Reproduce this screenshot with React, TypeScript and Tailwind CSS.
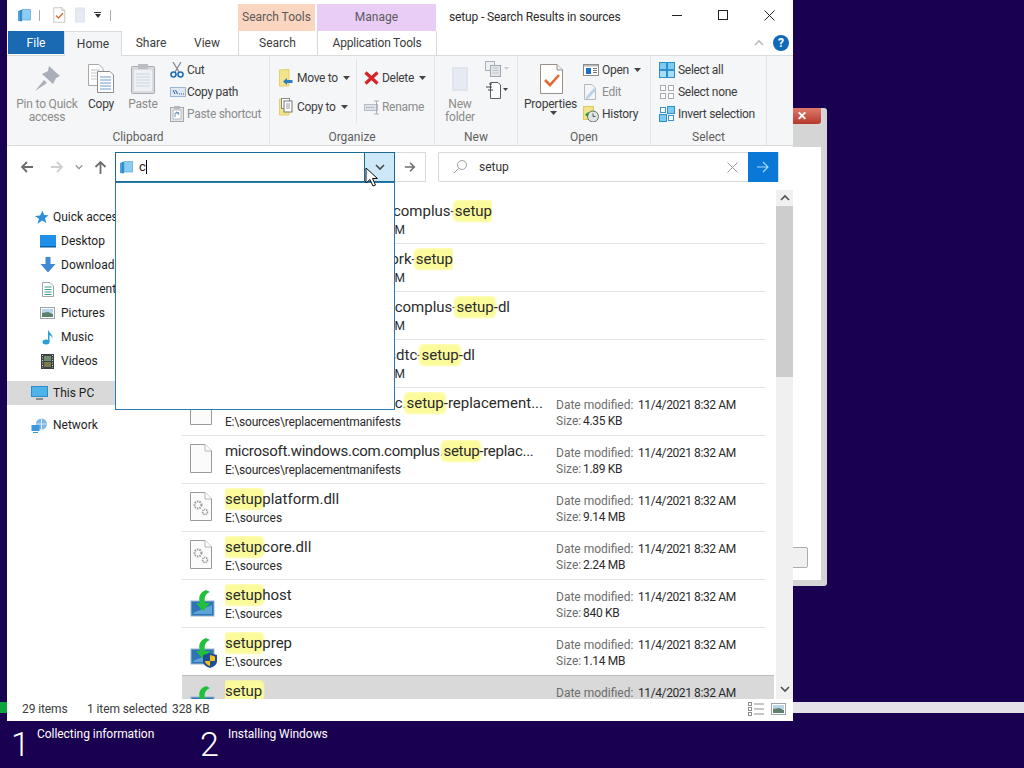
import React from 'react';

// small drawings for the ribbon and the explorer panes
const ExplorerIcon = ({ size = 15 }: { size?: number }) => (
  <svg width={size} height={size} viewBox="0 0 15 15">
    <path d="M1 3 L5 1.5 V13.5 L1 13 Z" fill="#4aa3df" />
    <path d="M5 1.5 H13.5 V12 H5 Z" fill="#8ccdf2" />
    <path d="M3 2 H5 V13 H3 Z" fill="#2f86c5" />
    <path d="M5 1.5 H13.5 V12 H5 Z" fill="none" stroke="#5aa6d6" strokeWidth="0.7" />
  </svg>
);

const PropertiesIcon = ({ size = 32 }: { size?: number }) => (
  <svg width={size} height={size} viewBox="0 0 32 32">
    <path d="M5.5 1.5 H22 L27.5 7 V30.5 H5.5 Z" fill="#fff" stroke="#9a8f88" />
    <path d="M22 1.5 V7 H27.5" fill="#eee" stroke="#9a8f88" />
    <path d="M10 17 L15 22 L24 12" fill="none" stroke="#df6b33" strokeWidth="2.6" />
  </svg>
);

const PinIcon = () => (
  <svg width="32" height="32" viewBox="0 0 32 32">
    <path d="M18 3 L29 13 L25 15 L22 21 L11 11 L17 8 Z" fill="#a9afb8" />
    <path d="M13 17 L4 28 L16 20 Z" fill="#a9afb8" />
  </svg>
);

const CopyIcon = () => (
  <svg width="32" height="32" viewBox="0 0 32 32">
    <path d="M3.5 1.5 H14 L18 5.5 V22.5 H3.5 Z" fill="#fff" stroke="#a8a8a8" />
    <path d="M6 7h9M6 10h9M6 13h9M6 16h9" stroke="#c5c5c5" />
    <path d="M12.5 8.5 H25 L28.5 12 V29.5 H12.5 Z" fill="#fff" stroke="#8d8d8d" />
    <path d="M15 14h11M15 17h11M15 20h11M15 23h11M15 26h11" stroke="#6b9cc9" />
  </svg>
);

const PasteIcon = () => (
  <svg width="32" height="32" viewBox="0 0 32 32">
    <rect x="4.5" y="3.5" width="23" height="27" rx="1" fill="#d7dade" stroke="#a7abb0" />
    <rect x="7" y="7" width="18" height="21" fill="#eef1f6" />
    <path d="M9 11h14M9 14h14M9 17h14M9 20h14M9 23h14" stroke="#c9d2df" />
    <rect x="11" y="1" width="10" height="5" fill="#b9bcc1" />
  </svg>
);

const CutIcon = () => (
  <svg width="14" height="16" viewBox="0 0 14 16">
    <path d="M3 0 L9 10 M11 0 L5 10" stroke="#8a8a8a" strokeWidth="1.3" />
    <circle cx="3.5" cy="12.5" r="2.5" fill="none" stroke="#1f6fb5" strokeWidth="1.6" />
    <circle cx="10.5" cy="12.5" r="2.5" fill="none" stroke="#1f6fb5" strokeWidth="1.6" />
  </svg>
);

const CopyPathIcon = () => (
  <svg width="16" height="10" viewBox="0 0 16 10">
    <rect x="0.5" y="0.5" width="15" height="9" fill="#dfe9f5" stroke="#9db7d3" />
    <path d="M3 3 L5 7 M5.5 3 L7.5 7" stroke="#2a5f95" />
    <path d="M9 7h1M11 7h1M13 7h1" stroke="#2a5f95" />
  </svg>
);

const PasteShortcutIcon = () => (
  <svg width="14" height="16" viewBox="0 0 14 16">
    <rect x="0.5" y="1.5" width="13" height="14" fill="#e3e6ea" stroke="#a5a9ae" />
    <rect x="3" y="4" width="8" height="9" fill="#fff" stroke="#b5b9be" />
    <path d="M5 11 V7 H9 M6 6 L9 7 L8 9" fill="none" stroke="#6f8fb0" />
    <rect x="4" y="0" width="6" height="3" fill="#b4b7bb" />
  </svg>
);

const MoveToIcon = () => (
  <svg width="14" height="18" viewBox="0 0 14 18">
    <path d="M0.5 1 L10 0.5 V17 H0.5 Z" fill="#f4e38d" stroke="#e5cf6b" />
    <path d="M4 12.5 L8 9 V11 H13.5 V14 H8 V16 Z" fill="#2e7cc2" />
  </svg>
);

const CopyToIcon = () => (
  <svg width="14" height="18" viewBox="0 0 14 18">
    <path d="M0.5 1 L10 0.5 V17 H0.5 Z" fill="#f4e38d" stroke="#e5cf6b" />
    <rect x="2.5" y="0.5" width="8" height="10" fill="#fff" stroke="#8a8a8a" />
    <rect x="5" y="3" width="8" height="11" fill="#fff" stroke="#777" />
    <path d="M7 6h4M7 8h4M7 10h4" stroke="#999" />
  </svg>
);

const DeleteIcon = () => (
  <svg width="15" height="14" viewBox="0 0 15 14">
    <path d="M1.5 1.5 L13.5 12.5 M13.5 1.5 L1.5 12.5" stroke="#d5252b" strokeWidth="3.2" />
  </svg>
);

const RenameIcon = () => (
  <svg width="18" height="15" viewBox="0 0 18 15">
    <rect x="0.5" y="4.5" width="13" height="6" fill="#dde2e8" stroke="#b9bec4" />
    <path d="M2 7.5h8" stroke="#9ba3ac" strokeDasharray="1.5 1" />
    <path d="M10 1h5M10 14h5M12.5 1v13" stroke="#a9aeb5" />
  </svg>
);

const NewFolderIcon = ({ w = 18, h = 26 }: { w?: number; h?: number }) => (
  <svg width={w} height={h} viewBox="0 0 18 26">
    <rect x="1" y="1" width="16" height="24" rx="1" fill="#dfe4ee" />
    <rect x="3" y="3" width="12" height="20" fill="#e6eaf3" />
  </svg>
);

const SmallCopyGray = () => (
  <svg width="24" height="16" viewBox="0 0 24 16">
    <rect x="0.5" y="0.5" width="9" height="9" fill="#eceff3" stroke="#a9afb6" />
    <rect x="5.5" y="4.5" width="10" height="11" fill="#e4e8ed" stroke="#a0a6ad" />
    <path d="M7.5 7h6M7.5 9.5h6M7.5 12h6" stroke="#bcc2c9" />
    <path d="M19 6 L24 6 L21.5 9 Z" fill="#c8ccd2" />
  </svg>
);

const SmallNewItem = () => (
  <svg width="24" height="17" viewBox="0 0 24 17">
    <path d="M5.5 0.5 H13 L15.5 3 V16.5 H5.5 Z" fill="#fff" stroke="#5c5c5c" />
    <path d="M1 5h6M3 8h5M4 2h3" stroke="#444" />
    <path d="M18 6 L23 6 L20.5 9 Z" fill="#444" />
  </svg>
);

const OpenIcon = () => (
  <svg width="16" height="12" viewBox="0 0 16 12">
    <rect x="0.5" y="0.5" width="15" height="11" fill="#fff" stroke="#8c8c8c" />
    <rect x="1" y="1" width="14" height="1.5" fill="#b8b8b8" />
    <rect x="3" y="4" width="5" height="6" fill="#1f6fc1" />
    <path d="M10 4.5h4M10 6.5h4M10 8.5h4" stroke="#777" />
  </svg>
);

const EditIcon = () => (
  <svg width="14" height="16" viewBox="0 0 14 16">
    <path d="M1.5 0.5 H9 L12.5 4 V15.5 H1.5 Z" fill="#f3f5f8" stroke="#b5bac0" />
    <path d="M3 13 L11 4 L13 6 L5 15 L3 15 Z" fill="#bcd2e8" />
  </svg>
);

const HistoryIcon = () => (
  <svg width="16" height="16" viewBox="0 0 16 16">
    <rect x="0.5" y="0.5" width="10" height="13" fill="#f2e28a" stroke="#dcc964" />
    <circle cx="10" cy="10.5" r="5.5" fill="#dfe3e6" stroke="#5a7a5a" />
    <path d="M10 7.5 V10.5 H12.5" stroke="#555" fill="none" />
    <path d="M2 9 A6 6 0 0 1 6 6 L5 11 Z" fill="#2e9a38" />
  </svg>
);

const SelectAllIcon = () => (
  <svg width="16" height="16" viewBox="0 0 16 16">
    <rect width="16" height="16" fill="#2f8fc9" />
    <rect x="1" y="1" width="6" height="6" fill="#7ccbf2" />
    <rect x="9" y="1" width="6" height="6" fill="#7ccbf2" />
    <rect x="1" y="9" width="6" height="6" fill="#a5def8" />
    <rect x="9" y="9" width="6" height="6" fill="#a5def8" />
  </svg>
);

const SelectNoneIcon = () => (
  <svg width="16" height="16" viewBox="0 0 16 16" fill="#fff" stroke="#a8acb0">
    <rect x="1.5" y="1.5" width="5" height="5" />
    <rect x="9.5" y="1.5" width="5" height="5" />
    <rect x="1.5" y="9.5" width="5" height="5" />
    <rect x="9.5" y="9.5" width="5" height="5" />
  </svg>
);

const InvertIcon = () => (
  <svg width="16" height="16" viewBox="0 0 16 16">
    <rect x="1.5" y="1.5" width="5" height="5" fill="#fff" stroke="#3d93c9" />
    <rect x="8.5" y="0.5" width="7" height="7" fill="#7ccbf2" stroke="#2f8fc9" />
    <rect x="0.5" y="8.5" width="7" height="7" fill="#7ccbf2" stroke="#2f8fc9" />
    <rect x="9.5" y="9.5" width="5" height="5" fill="#fff" stroke="#3d93c9" />
  </svg>
);

const Arrow = ({ left, color, size = 14, weight = 1.8 }: { left?: boolean; color: string; size?: number; weight?: number }) => (
  <svg width={size} height={size} viewBox="0 0 14 14" fill="none" stroke={color} strokeWidth={weight}>
    {left ? <path d="M13 7 H2 M7 2 L2 7 L7 12" /> : <path d="M1 7 H12 M7 2 L12 7 L7 12" />}
  </svg>
);

const Caret = ({ color = '#444' }: { color?: string }) => (
  <svg width="7" height="4" viewBox="0 0 7 4" className="ml-[5px]">
    <path d="M0 0 H7 L3.5 4 Z" fill={color} />
  </svg>
);

const Chevron = ({ up, color = '#555', size = 10 }: { up?: boolean; color?: string; size?: number }) => (
  <svg width={size} height={size} viewBox="0 0 10 10" fill="none" stroke={color} strokeWidth="1.6">
    {up ? <path d="M1 7 L5 3 L9 7" /> : <path d="M1 3 L5 7 L9 3" />}
  </svg>
);

// nav pane icons
const StarIcon = () => (
  <svg width="15" height="15" viewBox="0 0 15 15">
    <path d="M8.5 0.5 L10 5 L14.5 5.2 L11 8.2 L12.3 13 L8 10.5 L3.5 14 L5 8.8 L0.8 6 L6 5.5 Z" fill="#2d8fd8" />
  </svg>
);
const DesktopIcon = () => (
  <svg width="16" height="13" viewBox="0 0 16 13">
    <rect width="16" height="12" fill="#1e90ea" />
    <rect y="11" width="16" height="1.5" fill="#0d5d9e" />
  </svg>
);
const DownloadIcon = () => (
  <svg width="16" height="16" viewBox="0 0 16 16">
    <path d="M5.5 0 H10.5 V7 H15.5 L8 15.5 L0.5 7 H5.5 Z" fill="#3f88d6" />
  </svg>
);
const DocumentsIcon = () => (
  <svg width="12" height="15" viewBox="0 0 12 15">
    <path d="M0.5 0.5 H8 L11.5 4 V14.5 H0.5 Z" fill="#fff" stroke="#9ba3ab" />
    <path d="M2.5 5h7M2.5 7.5h7M2.5 10h7M2.5 12.5h7" stroke="#3f9d8f" />
  </svg>
);
const PicturesIcon = () => (
  <svg width="15" height="12" viewBox="0 0 15 12">
    <rect x="0.5" y="0.5" width="14" height="11" fill="#fff" stroke="#9ba3ab" />
    <rect x="2" y="2" width="11" height="4" fill="#b9d5ea" />
    <path d="M2 6 L8 5 L13 7 V10 H2 Z" fill="#5d7f6b" />
  </svg>
);
const MusicIcon = () => (
  <svg width="12" height="16" viewBox="0 0 12 16">
    <ellipse cx="4" cy="13" rx="3.5" ry="2.5" fill="#2a9fd4" />
    <path d="M6 13 V0.5 C7 4 11 5 10.5 10 C10 7 8 6.5 7.5 6 V13 Z" fill="#2a9fd4" />
  </svg>
);
const VideosIcon = () => (
  <svg width="13" height="15" viewBox="0 0 13 15">
    <rect width="13" height="15" fill="#3b4147" />
    <rect x="3" y="2" width="7" height="5" fill="#6f8f70" />
    <rect x="3" y="8" width="7" height="5" fill="#7b7a4d" />
    <path d="M1.5 1v13M11.5 1v13" stroke="#d5d5d5" strokeDasharray="1 1.5" />
  </svg>
);
const PcIcon = () => (
  <svg width="17" height="15" viewBox="0 0 17 15">
    <rect x="0.5" y="0.5" width="16" height="10" fill="#4fb3ea" stroke="#2d8cc7" />
    <path d="M5 13h7" stroke="#8a8a8a" strokeWidth="2" />
  </svg>
);
const NetworkIcon = () => (
  <svg width="17" height="15" viewBox="0 0 17 15">
    <circle cx="10.5" cy="6" r="5.5" fill="#7fb6e6" />
    <path d="M5.5 6h10M10.5 .5v11" stroke="#d7e9f7" />
    <rect x="0.5" y="7" width="8" height="6" fill="#3b98dc" />
    <path d="M2 14.5h5" stroke="#3b98dc" />
  </svg>
);

// result list icons
const BlankFile = ({ gears }: { gears?: boolean }) => (
  <svg width="22" height="29" viewBox="0 0 22 29">
    <path d="M0.5 0.5 H15 L21.5 7 V28.5 H0.5 Z" fill="#fbfbfb" stroke="#9a9a9a" />
    <path d="M15 0.5 V7 H21.5" fill="#fff" stroke="#b5b5b5" />
    {gears && (
      <g fill="none" stroke="#9a9a9a">
        <circle cx="8" cy="13" r="3.5" strokeWidth="2" strokeDasharray="1.5 1" />
        <circle cx="15" cy="20" r="2.5" strokeWidth="1.6" strokeDasharray="1.3 .8" />
      </g>
    )}
  </svg>
);

const SetupIcon = ({ shield }: { shield?: boolean }) => (
  <svg width="28" height="32" viewBox="0 0 28 32" className="overflow-visible">
    <rect x="1" y="13" width="23" height="15" fill="#2c76b8" />
    <rect x="1" y="13" width="23" height="15" fill="none" stroke="#9bb4c8" />
    <path d="M3 25 L22 17 V26 H3 Z" fill="#5fa4d8" />
    <path d="M16 2 C10 4 8 9 10 15 H6 L13 23 L20 15 H15 C14 10 15 6 20 4 Z" fill="#21c03c" />
    {shield && (
      <g>
        <path d="M20 17 L27 19 V25 C27 29 23 31 20 32 C17 31 13 29 13 25 V19 Z" fill="#1f4f8f" />
        <path d="M20 19 L25 20.5 V25 H20 Z M20 25 V30 C17.5 29 15 27.5 15 25 Z" fill="#f3c01c" />
      </g>
    )}
  </svg>
);

const Group = ({ w, label, children }: { w: string; label: string; children: React.ReactNode }) => (
  <div className={`${w} h-full flex flex-col border-r border-[#e2e4e7]`}>
    <div className="flex-1 flex pt-[3px]">{children}</div>
    <div className="h-[18px] leading-[20px] text-center text-[12px] text-[#5e5e5e]">{label}</div>
  </div>
);

const Large = ({ w, icon, label, dim, caret }: { w: string; icon: React.ReactNode; label: string[]; dim?: boolean; caret?: boolean }) => (
  <div className={`${w} shrink-0 flex flex-col items-center`}>
    <div className="h-[34px] mt-[3px] flex items-center justify-center">{icon}</div>
    <div className={`mt-[2px] text-[12px] leading-[13px] tracking-[-0.2px] text-center whitespace-nowrap ${dim ? 'text-[#8c8c8c]' : 'text-[#3c3c3c]'}`}>
      {label.map(l => (
        <div key={l}>{l}</div>
      ))}
    </div>
    {caret && <Caret />}
  </div>
);

const Small = ({ icon, label, dim, caret, iconW = 'w-[17px]' }: { icon: React.ReactNode; label: string; dim?: boolean; caret?: boolean; iconW?: string }) => (
  <div className="h-[22px] flex items-center whitespace-nowrap">
    <div className={`${iconW} flex items-center`}>{icon}</div>
    <span className={`text-[12px] tracking-[-0.3px] ${dim ? 'text-[#8c8c8c]' : 'text-[#3c3c3c]'}`}>{label}</span>
    {caret && <Caret />}
  </div>
);

const Ribbon = () => (
  <div className="h-[91px] shrink-0 bg-[#f5f6f7] border-y border-[#dadbdc] flex">
    <Group w="w-[263px]" label="Clipboard">
      <div className="w-[7px]" />
      <Large w="w-[66px]" icon={<PinIcon />} label={['Pin to Quick', 'access']} dim />
      <Large w="w-[42px]" icon={<CopyIcon />} label={['Copy']} />
      <Large w="w-[42px]" icon={<PasteIcon />} label={['Paste']} dim />
      <div className="ml-[6px]">
        <Small icon={<CutIcon />} label="Cut" />
        <Small icon={<CopyPathIcon />} label="Copy path" />
        <Small icon={<PasteShortcutIcon />} label="Paste shortcut" dim />
      </div>
    </Group>
    <Group w="w-[165px]" label="Organize">
      <div className="ml-[9px] pt-[8px] w-[77px] flex flex-col gap-[7px]">
        <Small icon={<MoveToIcon />} label="Move to" caret iconW="w-[18px]" />
        <Small icon={<CopyToIcon />} label="Copy to" caret iconW="w-[18px]" />
      </div>
      <div className="w-px h-[64px] bg-[#e2e4e7]" />
      <div className="ml-[7px] pt-[8px] flex flex-col gap-[7px]">
        <Small icon={<DeleteIcon />} label="Delete" caret iconW="w-[18px]" />
        <Small icon={<RenameIcon />} label="Rename" dim iconW="w-[18px]" />
      </div>
    </Group>
    <Group w="w-[83px]" label="New">
      <Large w="w-[50px]" icon={<NewFolderIcon />} label={['New', 'folder']} dim />
      <div className="pt-[2px] flex flex-col gap-[5px]">
        <SmallCopyGray />
        <SmallNewItem />
      </div>
    </Group>
    <Group w="w-[133px]" label="Open">
      <Large w="w-[65px]" icon={<PropertiesIcon />} label={['Properties']} caret />
      <div>
        <Small icon={<OpenIcon />} label="Open" caret iconW="w-[19px]" />
        <Small icon={<EditIcon />} label="Edit" dim iconW="w-[19px]" />
        <Small icon={<HistoryIcon />} label="History" iconW="w-[19px]" />
      </div>
    </Group>
    <Group w="w-[116px]" label="Select">
      <div className="ml-[8px]">
        <Small icon={<SelectAllIcon />} label="Select all" iconW="w-[19px]" />
        <Small icon={<SelectNoneIcon />} label="Select none" iconW="w-[19px]" />
        <Small icon={<InvertIcon />} label="Invert selection" iconW="w-[19px]" />
      </div>
    </Group>
  </div>
);

const navItems = [
  { label: 'Quick access', icon: <StarIcon />, indent: 'pl-[27px]', gap: 'w-[19px]' },
  { label: 'Desktop', icon: <DesktopIcon />, indent: 'pl-[33px]', gap: 'w-[21px]' },
  { label: 'Downloads', icon: <DownloadIcon />, indent: 'pl-[33px]', gap: 'w-[21px]' },
  { label: 'Documents', icon: <DocumentsIcon />, indent: 'pl-[35px]', gap: 'w-[19px]' },
  { label: 'Pictures', icon: <PicturesIcon />, indent: 'pl-[33px]', gap: 'w-[21px]' },
  { label: 'Music', icon: <MusicIcon />, indent: 'pl-[35px]', gap: 'w-[19px]' },
  { label: 'Videos', icon: <VideosIcon />, indent: 'pl-[34px]', gap: 'w-[20px]' },
];

const NavPane = () => (
  <div className="w-[175px] shrink-0 pt-[18px] text-[12px] text-[#1e1e1e]">
    {navItems.map(n => (
      <div key={n.label} className={`h-6 flex items-center ${n.indent}`}>
        <div className={`${n.gap} flex items-center`}>{n.icon}</div>
        <span className="whitespace-nowrap">{n.label}</span>
      </div>
    ))}
    <div className="h-6 mt-2 flex items-center pl-[24px] bg-[#d9d9d9]">
      <div className="w-[22px] flex items-center"><PcIcon /></div>
      <span>This PC</span>
    </div>
    <div className="h-6 mt-2 flex items-center pl-[24px]">
      <div className="w-[22px] flex items-center"><NetworkIcon /></div>
      <span>Network</span>
    </div>
  </div>
);

const Hit = ({ children }: { children: React.ReactNode }) => (
  <span className="bg-[#fbfb9c] rounded-[3px] shadow-[0_0_2px_2px_#fbfb9c]">{children}</span>
);

type Result = {
  before: string;
  hit: string;
  after: string;
  path: string;
  icon: React.ReactNode;
  nameW: string;
  pathW?: string;
  size?: string;
};

const results: Result[] = [
  { before: 'microsoft-windows-complus-', hit: 'setup', after: '', path: 'E:\\sources\\M', icon: null, nameW: 'w-[267px] justify-end', pathW: 'w-[180px] justify-end' },
  { before: 'microsoft-windows-network-', hit: 'setup', after: '', path: 'E:\\sources\\M', icon: null, nameW: 'w-[228px] justify-end', pathW: 'w-[180px] justify-end' },
  { before: 'microsoft-windows-complus-', hit: 'setup', after: '-dl', path: 'E:\\sources\\M', icon: null, nameW: 'w-[285px] justify-end', pathW: 'w-[180px] justify-end' },
  { before: 'microsoft-windows-msdtc-', hit: 'setup', after: '-dl', path: 'E:\\sources\\M', icon: null, nameW: 'w-[250px] justify-end', pathW: 'w-[180px] justify-end' },
  { before: 'microsoft.windows.com.dtc.', hit: 'setup', after: '-replacement...', path: 'E:\\sources\\replacementmanifests', icon: <BlankFile />, nameW: 'w-[318px] justify-end', pathW: 'tracking-[-0.2px]', size: '4.35 KB' },
  { before: 'microsoft.windows.com.complus.', hit: 'setup', after: '-replac...', path: 'E:\\sources\\replacementmanifests', icon: <BlankFile />, nameW: 'w-[325px] tracking-[-0.28px]', pathW: 'tracking-[-0.2px]', size: '1.89 KB' },
  { before: '', hit: 'setup', after: 'platform.dll', path: 'E:\\sources', icon: <BlankFile gears />, nameW: 'w-[325px]', size: '9.14 MB' },
  { before: '', hit: 'setup', after: 'core.dll', path: 'E:\\sources', icon: <BlankFile gears />, nameW: 'w-[325px]', size: '2.24 MB' },
  { before: '', hit: 'setup', after: 'host', path: 'E:\\sources', icon: <SetupIcon />, nameW: 'w-[325px]', size: '840 KB' },
  { before: '', hit: 'setup', after: 'prep', path: 'E:\\sources', icon: <SetupIcon shield />, nameW: 'w-[325px]', size: '1.14 MB' },
  { before: '', hit: 'setup', after: '', path: 'E:\\sources', icon: <SetupIcon />, nameW: 'w-[325px]', size: '328 KB' },
];

const ResultRow = ({ r, selected }: { r: Result; selected?: boolean }) => (
  <div className={`h-12 shrink-0 flex -ml-px ${selected ? 'w-[593px] -mt-px bg-[#d9d9d9] border-t border-[#bcbcbc]' : 'w-[585px] border-b border-[#e3e3e3]'}`}>
    <div className="w-[44px] shrink-0 pl-[9px] pt-[8px]">{r.icon}</div>
    <div className="w-[331px] shrink-0 pt-[4px]">
      <div className={`${r.nameW} h-[23px] flex overflow-hidden whitespace-nowrap text-[15px] leading-[20px] text-[#2b2b2b]`}>
        <span className="pt-px">{r.before}<Hit>{r.hit}</Hit>{r.after}</span>
      </div>
      <div className={`${r.pathW ?? 'w-full'} flex text-[12px] leading-[14px] text-[#2b2b2b] whitespace-nowrap`}>{r.path}</div>
    </div>
    {r.size && (
      <div className="pt-[9px] text-[12px] leading-[16px] whitespace-nowrap">
        <div className="flex"><span className="w-[82px] text-[#6d6d6d]">Date modified:</span><span className="text-[#2b2b2b] tracking-[-0.4px]">11/4/2021 8:32 AM</span></div>
        <div className="flex"><span className="w-[27px] text-[#6d6d6d]">Size:</span><span className="text-[#2b2b2b] tracking-[-0.3px]">{r.size}</span></div>
      </div>
    )}
  </div>
);

const Scrollbar = () => (
  <div className="w-[17px] shrink-0 mt-[3px] bg-[#f0f0f0] flex flex-col items-center">
    <div className="h-[16px] flex items-center justify-center"><Chevron up color="#505050" /></div>
    <div className="w-full h-[171px] bg-[#cdcdcd]" />
    <div className="flex-1" />
    <div className="h-[21px] flex items-center justify-center"><Chevron color="#505050" /></div>
  </div>
);

export default function App() {
  return (
    <div className="relative w-[1024px] h-[768px] overflow-hidden bg-[#1a0050] font-['Roboto','Noto_Sans',sans-serif]">
      {/* setup dialog and progress bar behind the explorer window */}
      <div className="absolute left-[700px] top-[108px] w-[127px] h-[478px] bg-[#d5d5d5] rounded-[3px] pr-[6px] pb-[6px]">
        <div className="h-[16px] flex justify-end">
          <div className="w-[30px] h-[16px] rounded-b-[3px] bg-gradient-to-b from-[#e0796a] to-[#b5372c] flex items-center justify-center pr-[8px] text-white text-[12px] leading-none font-bold">✕</div>
        </div>
        <div className="mt-[23px] h-[433px] bg-white relative">
          <div className="absolute right-[13px] bottom-[12px] w-[30px] h-[21px] bg-[#f0f0f0] border border-[#adadad] rounded-[2px]" />
        </div>
      </div>
      <div className="absolute left-0 top-[702px] w-full h-[11px] bg-[#e4e1e8]">
        <div className="w-[8px] h-full bg-[#0da33f]" />
      </div>

      {/* setup steps */}
      <div className="absolute left-0 top-[721px] w-full h-[47px] flex text-white">
        <div className="w-[11px]" />
        <div className="w-[26px] text-[34px] leading-[46px] font-light">1</div>
        <div className="w-[163px] pt-[5px] text-[12px] leading-[17px] tracking-[-0.05px]">Collecting information</div>
        <div className="w-[28px] text-[34px] leading-[46px] font-light">2</div>
        <div className="pt-[5px] text-[12px] leading-[17px] tracking-[-0.05px]">Installing Windows</div>
      </div>

      {/* explorer window */}
      <div className="absolute left-[7px] top-0 w-[786px] h-[721px] bg-white flex flex-col">
        <div className="h-[31px] shrink-0 flex text-[12px]">
          <div className="w-[231px] flex items-center pl-[10px] pb-[1px]">
            <ExplorerIcon />
            <div className="w-px h-[11px] bg-[#aaa] ml-[7px]" />
            <div className="ml-[11px]"><PropertiesIcon size={16} /></div>
            <div className="ml-[6px]"><NewFolderIcon w={14} h={16} /></div>
            <div className="ml-[7px] flex flex-col items-center gap-px">
              <div className="w-[7px] h-px bg-[#333]" />
              <div className="w-0 h-0 border-x-[3.5px] border-x-transparent border-t-[4px] border-t-[#333]" />
            </div>
            <div className="w-px h-[11px] bg-[#aaa] ml-[9px]" />
          </div>
          <div className="w-[77px] mt-[4px] bg-[#fad5bf] text-center leading-[27px] text-[#5b5b5b]">Search Tools</div>
          <div className="w-[119px] mt-[4px] ml-[2px] bg-[#e9cdf6] text-center leading-[27px] text-[#5b5b5b]">Manage</div>
          <div className="ml-[13px] w-[205px] pt-[8px] whitespace-nowrap text-[#2b2b2b] tracking-[-0.15px]">setup - Search Results in sources</div>
          <div className="w-[46px] flex items-center justify-center pb-[1px]"><div className="w-[10px] h-px bg-[#222]" /></div>
          <div className="w-[46px] flex items-center justify-center pb-[1px]"><div className="w-[10px] h-[10px] border border-[#222]" /></div>
          <div className="w-[46px] flex items-center justify-center pb-[1px]">
            <svg width="11" height="11" viewBox="0 0 11 11" stroke="#222"><path d="M.5 .5 L10.5 10.5 M10.5 .5 L.5 10.5" /></svg>
          </div>
        </div>

        <div className="h-[24px] shrink-0 flex text-[12px] text-[#3c3c3c] leading-[24px]">
          <div className="w-[1px]" />
          <div className="w-[56px] h-[23px] bg-[#1a69b3] text-white text-center">File</div>
          <div className="w-[58px] h-[25px] z-10 bg-[#f5f6f7] border-x border-t border-[#dadbdc] text-center">Home</div>
          <div className="w-[58px] text-center">Share</div>
          <div className="w-[54px] text-center">View</div>
          <div className="w-[4px]" />
          <div className="w-[78px] border-l border-[#d8d8d8] text-center">Search</div>
          <div className="w-[120px] ml-[1px] border-x border-[#d8d8d8] text-center tracking-[-0.2px]">Application Tools</div>
          <div className="flex-1 flex items-center justify-end gap-[9px] pr-[4px]">
            <Chevron up color="#bbb" />
            <div className="w-[16px] h-[16px] rounded-full bg-[#0f68b8] text-white text-[12px] leading-[16px] text-center font-bold">?</div>
          </div>
        </div>

        <Ribbon />

        <div className="h-[41px] shrink-0 flex items-start pt-[6px] text-[12px]">
          <div className="w-[108px] h-[30px] flex items-center pl-[13px]">
            <Arrow left color="#6d6d6d" />
            <div className="ml-[16px]"><Arrow color="#cfcfcf" /></div>
            <div className="ml-[11px]"><Chevron color="#888" size={8} /></div>
            <div className="ml-[11px]">
              <svg width="13" height="14" viewBox="0 0 13 14" fill="none" stroke="#6d6d6d" strokeWidth="1.8"><path d="M6.5 14 V2 M1.5 7 L6.5 2 L11.5 7" /></svg>
            </div>
          </div>
          <div className="w-[280px] h-[30px] border border-[#1a6a94] flex items-center">
            <div className="ml-[3px]"><ExplorerIcon /></div>
            <span className="ml-[5px] text-[13px] text-[#222]">c</span>
            <div className="w-px h-[14px] bg-black" />
            <div className="flex-1" />
            <div className="w-[30px] h-full bg-[#cde8f8] border-l border-[#1a6a94] flex items-center justify-center"><Chevron color="#4a4a4a" /></div>
          </div>
          <div className="w-[31px] h-[30px] border-y border-r border-[#d9d9d9] flex items-center justify-center"><Arrow color="#6f6f6f" size={12} /></div>
          <div className="ml-[12px] w-[341px] h-[30px] border border-[#d9d9d9] flex items-center rounded-[1px]">
            <svg width="16" height="16" viewBox="0 0 16 16" fill="none" stroke="#a0a0a0" className="ml-[13px]"><circle cx="10" cy="6" r="4.5" /><path d="M6.5 9.5 L2 14" /></svg>
            <span className="ml-[11px] text-[#333]">setup</span>
            <div className="flex-1" />
            <svg width="11" height="11" viewBox="0 0 11 11" stroke="#9a9a9a" className="mr-[10px]"><path d="M.5 .5 L10.5 10.5 M10.5 .5 L.5 10.5" /></svg>
            <div className="w-[30px] h-[30px] bg-[#0a78d7] flex items-center justify-center"><Arrow color="#a9d8ff" weight={1.2} /></div>
          </div>
        </div>

        <div className="flex-1 min-h-0 flex">
          <NavPane />
          <div className="flex-1 min-w-0 overflow-hidden pt-[9px] flex flex-col">
            {results.map((r, i) => (
              <ResultRow key={i} r={r} selected={i === results.length - 1} />
            ))}
          </div>
          <Scrollbar />
        </div>

        <div className="h-[22px] shrink-0 flex items-center text-[12px] text-[#3c3c3c] tracking-[-0.1px] pl-[15px] pb-[2px]">
          <span className="w-[65px]">29 items</span>
          <span className="w-[85px]">1 item selected</span>
          <span>328 KB</span>
          <div className="flex-1" />
          <svg width="16" height="14" viewBox="0 0 16 14" fill="none" stroke="#8d8d8d" className="mr-[7px]"><rect x="0.5" y="0.5" width="3" height="3" /><rect x="0.5" y="5.5" width="3" height="3" /><rect x="0.5" y="10.5" width="3" height="3" /><path d="M6 2h10M6 7h10M6 12h10" /></svg>
          <div className="mr-[7px]"><PicturesIcon /></div>
        </div>
      </div>

      {/* address bar dropdown and mouse pointer */}
      <div className="absolute left-[115px] top-[182px] w-[280px] h-[228px] bg-white border border-[#2a7cb0]" />
      <svg width="14" height="20" viewBox="0 0 14 20" className="absolute left-[365px] top-[167px]">
        <path d="M1 1 V16 L5 12.5 L8 19 L10.5 18 L7.5 11.5 H12.5 Z" fill="#fff" stroke="#111" />
      </svg>
    </div>
  );
}
